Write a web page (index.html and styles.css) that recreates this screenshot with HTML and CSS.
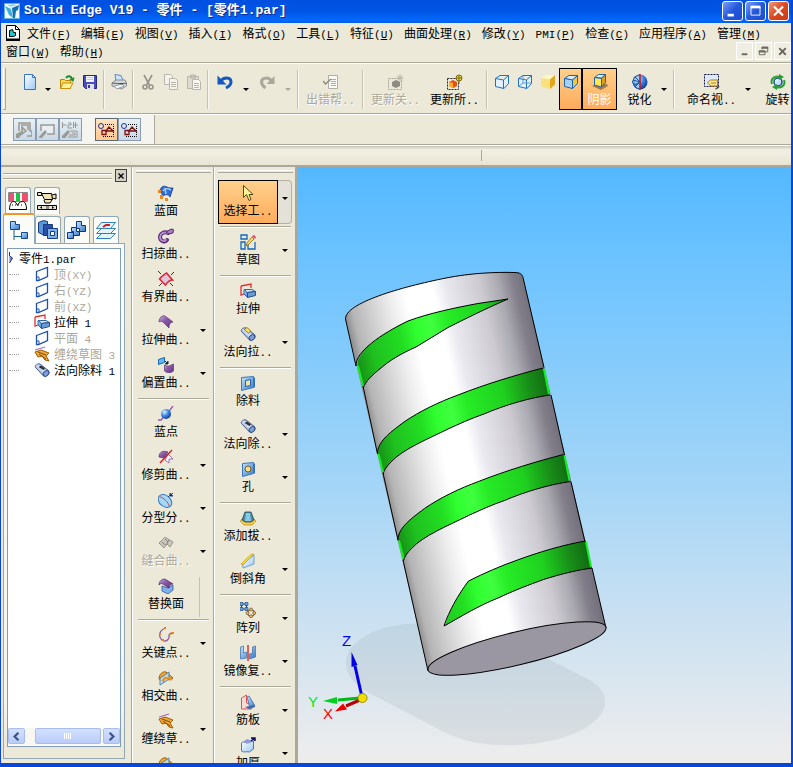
FILE: index.html
```
<!DOCTYPE html>
<html lang="zh">
<head>
    <meta charset="UTF-8">
    <meta name="viewport" content="width=device-width, initial-scale=1.0">
    <title>Solid Edge V19 - 零件 - [零件1.par]</title>
    <link rel="stylesheet" href="styles.css">
</head>
<body>
    <!-- icon sprite -->
    <svg class="sprite" aria-hidden="true">
        <defs>
            <linearGradient id="gBlue" x1="0" y1="0" x2="1" y2="1"><stop offset="0" stop-color="#c4e4ff"/><stop offset="1" stop-color="#3a78c8"/></linearGradient>
            <linearGradient id="gSteel" x1="0" y1="1" x2="1" y2="0"><stop offset="0" stop-color="#3c5c9c"/><stop offset=".5" stop-color="#d4e4f8"/><stop offset="1" stop-color="#5478b4"/></linearGradient>
            <linearGradient id="gPurple" x1="0" y1="0" x2="1" y2="1"><stop offset="0" stop-color="#d0b0e0"/><stop offset=".4" stop-color="#8c5ca8"/><stop offset="1" stop-color="#5c3480"/></linearGradient>
            <linearGradient id="gPaper" x1="0" y1="0" x2="1" y2="1"><stop offset="0" stop-color="#ffffff"/><stop offset="1" stop-color="#9cc8f8"/></linearGradient>
            <radialGradient id="gBall" cx=".35" cy=".3" r=".8"><stop offset="0" stop-color="#d8f0ff"/><stop offset=".5" stop-color="#3c84e0"/><stop offset="1" stop-color="#0a2c80"/></radialGradient>
        </defs>
        <symbol id="i-app" viewBox="0 0 16 16"><path fill="#f4faff" stroke="#6ab0d8" d="M.5.5h15v15H.5z"/><path fill="#39b0e0" d="M1 3l6 3 2 9-4-3z"/><path fill="#1470b0" d="M8 5l7-3-1 5-2 1-1 7H9z"/><path fill="#90d8f4" d="M3 2l6-1 4 1-6 2z"/></symbol>
        <symbol id="i-doc" viewBox="0 0 16 16"><path fill="#fff" stroke="#000" d="M1.500.5h9l4 4v10h-13z"/><path d="M1 13.500h14V16H1z"/><path d="M10.500.5v4h4" fill="none" stroke="#000"/><path fill="#18c8c8" stroke="#000" d="M4.500 5.500l3-1 1 3h2v3l-2 1h-4z"/></symbol>
        <symbol id="i-new" viewBox="0 0 16 16"><path fill="url(#gPaper)" stroke="#3c74c4" d="M2.500.5h8l3 3v12h-11z"/><path fill="#fff" stroke="#3c74c4" d="M10.500.5v3h3z"/></symbol>
        <symbol id="i-open" viewBox="0 0 16 16"><path fill="#f8d850" stroke="#b8860b" d="M1.500 5.500h4l1 1h5v8h-10z"/><path fill="#fff09a" stroke="#c89010" d="M4 9h10l-3 5.500H1.500z"/><path fill="none" stroke="#18902c" stroke-width="2" d="M7 4c2-3 5-2 6 1"/><path fill="#18902c" d="M15.500 3l-1 5-4-2.500z"/></symbol>
        <symbol id="i-save" viewBox="0 0 16 16"><path fill="#4a4cc0" stroke="#26287c" d="M1.500 1.500h13v13h-11l-2-2z"/><path fill="#f4f6ff" d="M4 2h8v6H4z"/><path fill="#bcc" d="M5 3h6v1H5zm0 2h6v1H5z"/><path fill="#e0e2ea" d="M5 10h7v5H5z"/><path fill="#3838a0" d="M6 11h2v3H6z"/></symbol>
        <symbol id="i-print" viewBox="0 0 16 16"><path fill="#cfe6ff" stroke="#5588c4" d="M4 .5l6 1 2 5-7 1z"/><path fill="#d4d6da" stroke="#888c94" d="M1 9l4-3h9l1.500 3v3l-5 3L1 12z"/><path fill="#f4f4f4" stroke="#9a9ea6" d="M3 12l8-2 2 2-7 3z"/><path stroke="#6a6e76" d="M1 9l10 1 4.500-1"/></symbol>
        <symbol id="i-cut" viewBox="0 0 16 16"><g fill="none" stroke="#96938a" stroke-width="1.600"><path d="M4 1l5.500 10M12 1L6.500 11"/><circle cx="5" cy="13" r="2"/><circle cx="11" cy="13" r="2"/></g></symbol>
        <symbol id="i-copy" viewBox="0 0 16 16"><g fill="#f4f3ee" stroke="#b8b5aa"><path d="M1.500.5h6l2 2v8h-8z"/><path d="M6.500 4.500h6l2 2v9h-8z"/><path d="M8 8.500h5M8 10.500h5M8 12.500h5"/></g></symbol>
        <symbol id="i-paste" viewBox="0 0 16 16"><g fill="#dedbd0" stroke="#b8b5aa"><path d="M1.500 2.500h11v12h-11z"/><path fill="#c4c1b6" d="M4.500 1h5v3h-5z"/><path fill="#f8f7f2" d="M6.500 5.500h6l2 2v8h-8z"/><path d="M8 9.500h5M8 11.500h5M8 13.500h5"/></g></symbol>
        <symbol id="i-undo" viewBox="0 0 16 16"><path fill="none" stroke="#1458c0" stroke-width="3" d="M3.500 7.500c3-5 10.500-4.500 10.500.5 0 3-2 4.500-5 6"/><path fill="#1458c0" d="M.5 1.500v9h9L6 7z"/></symbol>
        <symbol id="i-redo" viewBox="0 0 16 16"><path fill="none" stroke="#aaa79c" stroke-width="3" d="M12.500 7c-2.500-4-10-4-10 1 0 3 2 4.500 4 6"/><path fill="#aaa79c" d="M15.500 2v8h-8z"/></symbol>
        <symbol id="i-error" viewBox="0 0 16 16"><path fill="#fbfaf6" stroke="#b0ada2" d="M5.500 1.500h9v13h-9z"/><path stroke="#b0ada2" d="M8 5.500h5M8 7.500h5M8 9.500h5M8 11.500h5"/><path fill="none" stroke="#8e8b80" stroke-width="1.500" d="M0 7l2.500 3L8 5"/></symbol>
        <symbol id="i-upd-off" viewBox="0 0 16 16"><path fill="none" stroke="#aaa79c" stroke-dasharray="2 1" d="M.5 4.500h13v11H.5z"/><path fill="#8e8b80" d="M4 8l4-2 4 2v4l-4 2-4-2z"/><path stroke="#b8b5aa" d="M12 0v8M8.500 4h7M9.500 1.500l5 5M14.500 1.500l-5 5"/></symbol>
        <symbol id="i-upd" viewBox="0 0 16 16"><path fill="none" stroke="#28283c" stroke-dasharray="2 1" d="M.5 4.500h11v11H.5z"/><path fill="#e85010" d="M2 8l4-2 4 2v4l-4 2-4-2z"/><path fill="#ffb020" d="M2 8l4 1v5l-4-2z"/><circle cx="12" cy="4" r="3" fill="#f0d840" stroke="#7a6a10"/><path stroke="#7a6a10" d="M12 1v9M9 4h6"/></symbol>
        <symbol id="i-wire" viewBox="0 0 16 16"><path fill="#e4f2ff" stroke="#2070c0" d="M1.500 4.500L6 1.500h8.500v8L10 14.500l-8.500-2zM1.500 4.500l8 1.500 5-4.500M9.500 6v8"/></symbol>
        <symbol id="i-wire2" viewBox="0 0 16 16"><path fill="#e4f2ff" stroke="#2070c0" d="M1.500 4.500L6 1.500h8.500v8L10 14.500l-8.500-2zM1.500 4.500l8 1.500 5-4.500M9.500 6v8"/><path fill="none" stroke="#5a98d4" d="M6 2v7l-4.500 3.500M6 9h8"/></symbol>
        <symbol id="i-gold" viewBox="0 0 16 16"><path fill="#fff6c0" d="M1 4l5-3h9l-5 4.500z"/><path fill="#fbe080" d="M1 4l9 1.500V15l-9-2.500z"/><path fill="#e4a820" d="M10 5.500L15 1v9.500L10 15z"/></symbol>
        <symbol id="i-shade" viewBox="0 0 16 16"><path fill="#d8eeff" stroke="#1c64b0" d="M1.500 4.500L6 1.500h8.500L9.500 6z"/><path fill="#a8d0f4" stroke="#1c64b0" d="M1.500 4.500l8 1.500v8.500l-8-2z"/><path fill="#f4c830" stroke="#1c64b0" d="M9.500 6l5-4.500v8l-5 5z"/></symbol>
        <symbol id="i-shadow" viewBox="0 0 16 16"><path fill="#a87a48" d="M0 12l6-3 9 1 1 2-7 4z"/><path fill="#d8eeff" stroke="#1c64b0" d="M2.500 3.500l4-3h7l-4 3.500z"/><path fill="#ffe850" stroke="#1c64b0" d="M2.500 3.500l7 1v8.500l-7-2z"/><path fill="#d8a020" stroke="#1c64b0" d="M9.500 4.500l4-4v8l-4 4.500z"/></symbol>
        <symbol id="i-sharp" viewBox="0 0 16 16"><circle cx="8" cy="8" r="7.500" fill="url(#gBall)"/><path fill="#a8ccf0" stroke="#1c54a0" d="M8 .5L2.500 3 .5 8 3 13l5 2.500zM1 6l7 2-6 3M3 3l5 5-5 5"/><path stroke="#e81010" stroke-width="1.300" d="M8 0v16"/></symbol>
        <symbol id="i-named" viewBox="0 0 16 16"><path fill="#dcebfb" stroke="#181848" stroke-dasharray="2 1" d="M.5.5h14v12H.5z"/><path fill="#ffe890" stroke="#b07810" d="M3.500 8.500l3-2.500h7v6h-7z"/><path fill="none" stroke="#b07810" d="M7 9h5"/><path stroke="#787878" d="M11 15c3 0 4-1 4-3"/></symbol>
        <symbol id="i-rotate" viewBox="0 0 16 16"><circle cx="8" cy="8" r="4" fill="url(#gPaper)" stroke="#1c4c90" stroke-width="1.500"/><path fill="none" stroke="#28a030" stroke-width="2" d="M2 10C0 5 5 1 10 3M14 6c2 5-3 9-8 7"/><path fill="#28a030" d="M9 0l5 3-5 3zM7 10l-5 3 5 3z"/></symbol>
        <symbol id="i-g1" viewBox="0 0 16 16"><g fill="none" stroke="#9a9a90" stroke-width="1.500"><path d="M3 9V1h11v8h2v5h-5M5 3h7v5M1 15l6-7M6 5l4 4-4 3z"/></g><path fill="#9a9a90" d="M0 12l4-2 2 2-3 4H0z"/></symbol>
        <symbol id="i-g2" viewBox="0 0 16 16"><path fill="#e8eef2" stroke="#9a9a90" stroke-width="1.500" d="M2 9V3h13v9H8"/><path fill="#9a9a90" d="M0 15l6-7 2 2-5 6H0z"/></symbol>
        <symbol id="i-g3" viewBox="0 0 16 16"><path fill="none" stroke="#9a9a90" d="M.5 0v6M.5 3h4M6 1h3v2H6v3h4M11.500 0v6M13.500 0v6M11 3h5M8 9h7v6H6M10 11h3v2H7"/><path fill="#9a9a90" d="M0 14l6-6 2 2-5 6H0z"/></symbol>
        <symbol id="i-shapes" viewBox="0 0 16 16"><path fill="none" stroke="#000" stroke-dasharray="1 1" d="M7 2.500h8.500v12H4"/><circle cx="3" cy="4" r="2.500" fill="none" stroke="#2030a0"/><path fill="none" stroke="#7a1010" stroke-width="1.300" d="M4 8.500h4v4H4zM8 9l3-4 4 4z"/></symbol>
        <symbol id="i-lib" viewBox="0 0 20 20"><path fill="#fff" stroke="#888" d="M.5 1.500h19v9H.5z"/><path fill="#f05070" d="M1 2h5v8H1zm13 0h5v8h-5z"/><path fill="#18c840" d="M8 2h4v8H8z"/><path fill="#fff" stroke="#000" d="M1.500 18.500c0-5 2-8 4-8s3 2 4 4c1-2 2-4 5-4s4 4 4 8z"/><path stroke="#000" stroke-dasharray="1 2" d="M4 14h12"/></symbol>
        <symbol id="i-cam" viewBox="0 0 20 20"><path fill="#f0e4b4" stroke="#000" d="M4.500 2.500h10l1 6h-8zM.5 1.500h4v3h-4zM15 4l4-1v5l-4-1M7 9l1 3h5l2-3"/><path fill="#e4e0d0" stroke="#000" d="M.5 14.500h19v4H.5z"/><path d="M5 15v3L3 16.500zM15 15v3l2-1.500z"/><path fill="#888" d="M9 15h3v3H9z"/></symbol>
        <symbol id="i-path" viewBox="0 0 20 20"><path fill="none" stroke="#186098" d="M5 8v12M5 16.500h7"/><path fill="url(#gBlue)" stroke="#104890" d="M1.500 1.500h5v3h4v5h-9z"/><path fill="url(#gBlue)" stroke="#104890" d="M12.500 12.500h6v6h-6z"/></symbol>
        <symbol id="i-fam" viewBox="0 0 20 20"><path fill="#5a98d8" stroke="#183c80" d="M.5 2.500l5-2 4 1v3l-3 2v9l-6-3z"/><path fill="#2c50a8" stroke="#183c80" d="M5.500 4.500h9v11h-9z"/><path fill="#7cb0e8" stroke="#183c80" d="M9.500 8.500h10v10h-10z"/><path fill="#fff" stroke="#183c80" d="M12.500 11.500h4v4h-4z"/></symbol>
        <symbol id="i-parts" viewBox="0 0 20 20"><g fill="url(#gBlue)" stroke="#0c3484"><path d="M9.500 1.500h5v4h4v6h-6v-3h-3z"/><path d="M4.500 7.500h5v4h3v4h-6v-4h-2z"/><path d="M.5 12.500h6v6h-6z"/></g></symbol>
        <symbol id="i-layer" viewBox="0 0 20 20"><g fill="#e4f4ff" stroke="#3080b8"><path d="M.5 18.500l5-5h14l-5 5z"/><path d="M.5 13.500l5-5h14l-5 5z"/><path d="M.5 8.500l5-6h14l-5 6z"/></g><path fill="none" stroke="#e01818" stroke-width="2" d="M7 7l3-2h4"/></symbol>
        <symbol id="i-root" viewBox="0 0 8 16"><path fill="#6888d8" stroke="#203078" d="M1.500 2v4l3 2-3 5"/></symbol>
        <symbol id="i-plane" viewBox="0 0 16 16"><path fill="#fff" stroke="#1c50b0" stroke-width="1.300" d="M2.500 5.500l11-4v9l-9 4h-2z"/><path stroke="#1c50b0" d="M2 11h3v3" fill="none"/></symbol>
        <symbol id="i-extrude" viewBox="0 0 16 16"><path fill="none" stroke="#e03030" stroke-width="1.300" d="M1 3l10-2v4M1 3v9l3-1"/><path fill="#d4e8fa" stroke="#3468a4" d="M4 6.500h8l3.500 2-8 1z"/><path fill="url(#gBlue)" stroke="#3468a4" d="M4 6.500L7.500 9.500v5L4 11z"/><path fill="#6a9cd4" stroke="#28508c" d="M7.500 9.500l8-1v4l-8 2z"/></symbol>
        <symbol id="i-wrap" viewBox="0 0 16 16"><path fill="#f0a830" stroke="#a05c08" d="M1 6l6-2 8 3-3 3 3 5-4-1-3-4-4 1z"/><path fill="none" stroke="#7c4a10" d="M4 6l8 3M5 8l7 5"/><path stroke="#a070c0" stroke-width="1.300" d="M1 4l10-3"/></symbol>
        <symbol id="i-tube" viewBox="0 0 16 16"><path fill="url(#gSteel)" stroke="#2c4478" stroke-width=".8" d="M1.500 5.500c-1-2 2-4.500 4.500-3.500l8.500 6.500c2 3-2 6.500-5 5.500z"/><path fill="#302c30" d="M4.500 5l2.500-1.500 4 3L9.500 8z"/><ellipse cx="12" cy="11.500" rx="3.300" ry="2.500" transform="rotate(-45 12 11.500)" fill="#7ca0dc" stroke="#1c3060" stroke-width=".8"/></symbol>
        <symbol id="i-tubeadd" viewBox="0 0 16 16"><path fill="url(#gSteel)" stroke="#2c4478" stroke-width=".8" d="M1.500 5.500c-1-2 2-4.500 4.500-3.500l8.500 6.500c2 3-2 6.500-5 5.500z"/><path fill="#f8e060" stroke="#806818" stroke-width=".8" d="M4 3.500L7 1.500l4 3.500-2.500 2z"/><ellipse cx="12" cy="11.500" rx="3.300" ry="2.500" transform="rotate(-45 12 11.500)" fill="#7ca0dc" stroke="#1c3060" stroke-width=".8"/></symbol>
        <symbol id="i-bluesurf" viewBox="0 0 16 16"><path fill="#2c6cdc" stroke="#0c3494" stroke-width=".8" d="M2 5c2-5 5-4 7-3s3 1 6 1l-3 9c-2-3-4-3-7-1z"/><path fill="none" stroke="#a4d0ff" stroke-width="1.500" d="M5 6c2-3 4-3 8-1M7 3l1 6"/><path fill="#e88820" d="M0 5h3v3H0zm2 5h3v4H2zm5 3h3v3H7z"/></symbol>
        <symbol id="i-sweep" viewBox="0 0 16 16"><path fill="none" stroke="#5c3078" stroke-width="4" stroke-linecap="round" d="M10 5C6 3 2 6 2 9c0 4 5 6 7 3"/><path fill="none" stroke="#b890cc" stroke-width="1.800" stroke-linecap="round" d="M10 5C6 3 2 6 2 9c0 4 4 5 6 3"/><path fill="#a880c0" stroke="#5c3078" d="M8 4l5-3 2.500.5L15 5l-4 1z"/></symbol>
        <symbol id="i-bound" viewBox="0 0 16 16"><path fill="#e0c4dc" stroke="#e02030" stroke-width="1.500" d="M1.500 8c2-3 4-4 7-6l6 7c-3 0-5 2-7 5z"/><path stroke="#303030" d="M0 0l3 3M16 1l-3 3M1 15l3-3M15 15l-3-3"/></symbol>
        <symbol id="i-exsurf" viewBox="0 0 16 16"><path fill="url(#gPurple)" stroke="#5c3078" stroke-width=".7" d="M1 8c0-4 3-7 6-6l8 6c-3 0-4 3-4 6L6 9C4 7 2 7 1 8z"/></symbol>
        <symbol id="i-offset" viewBox="0 0 16 16"><path fill="#60b8f0" stroke="#1868b0" d="M.5 2.500l6-2v5l-6 2z"/><path stroke="#303030" d="M7 4l3 3M10 4v3H7"/><path fill="url(#gPurple)" stroke="#5c3078" stroke-width=".7" d="M6.500 8c3 2 5 1 9-1v7c-4 3-6 2-9 0z"/></symbol>
        <symbol id="i-bluedot" viewBox="0 0 16 16"><path fill="none" stroke="#9058a8" stroke-width="1.300" d="M0 14h3l9-10 3-4"/><circle cx="8" cy="8" r="5" fill="url(#gBall)"/></symbol>
        <symbol id="i-trim" viewBox="0 0 16 16"><path fill="url(#gPurple)" stroke="#5c3078" stroke-width=".7" d="M1 8c0-5 4-7 9-5L6 9z"/><path fill="#fff" stroke="#9070a8" d="M10 5l5 5-4 0 0 4-4-3z"/><path stroke="#e01818" stroke-width="1.300" d="M2 14L14 1"/></symbol>
        <symbol id="i-parting" viewBox="0 0 16 16"><ellipse cx="7" cy="9" rx="7.500" ry="5.500" transform="rotate(40 7 9)" fill="#a4d8f8" stroke="#3878b8"/><path fill="none" stroke="#d84040" d="M2 5c3 0 9 6 9 9"/><path stroke="#1c3c80" d="M10 5l5-4M12 1v3h3"/></symbol>
        <symbol id="i-stitch" viewBox="0 0 16 16"><path fill="#c8c5ba" stroke="#9a978c" d="M1 8l6-6 8 5-3 5-3-3-3 4z"/><path stroke="#84817a" d="M4 7l3 3M7 4l3 3M11 5l-3 5"/></symbol>
        <symbol id="i-replace" viewBox="0 0 16 16"><path fill="#80b0ec" stroke="#305898" stroke-width=".8" d="M4 8l6 2 5-3v5l-5 4-6-3z"/><path fill="url(#gPurple)" stroke="#4c2068" stroke-width=".7" d="M1 7c0-4 3-6 6-6l8 5c-3 0-4 2-4 4L5 6C3 5 2 6 1 7z"/></symbol>
        <symbol id="i-keypt" viewBox="0 0 16 16"><path fill="none" stroke="#9058a8" stroke-width="1.300" d="M8 1C1 3 0 9 4 13c4 3 8-1 7-5 1-2 3-2 4-2"/><path fill="#e88020" d="M6 0h2v2H6zM1 6h2v2H1zm3 6h2v2H4zm7-6h2v2h-2zm3-1h2v2h-2z"/></symbol>
        <symbol id="i-inter" viewBox="0 0 16 16"><path fill="#f4a828" stroke="#a05c08" d="M1 9C1 4 5 1 8 2l7 6-4 2-5-3-2 4z"/><path fill="#c4e4fa" fill-opacity=".7" stroke="#4884b8" d="M2 8l9-6v7l-9 6z"/><path fill="none" stroke="#e89020" stroke-width="2" d="M5 12c1-5 4-5 9-2"/></symbol>
        <symbol id="i-arrow" viewBox="0 0 16 16"><path fill="#fff890" stroke="#504818" d="M3.500.5v12l3-3 2.500 6 2-1-2-5h4z"/></symbol>
        <symbol id="i-sketch" viewBox="0 0 16 16"><path fill="none" stroke="#1468b8" stroke-width="1.300" d="M1 1h6v4H1zM1 8h4v7H1zM8 10v5h7V8"/><path fill="#f8e070" stroke="#806818" stroke-width=".8" d="M7 9l5-6 2 2-6 6-2 .5z"/><path fill="#e04868" d="M12 2l2-1 2 2-1 2z"/></symbol>
        <symbol id="i-cutout" viewBox="0 0 16 16"><path fill="url(#gBlue)" stroke="#3c78bc" d="M1.500 2.500l12-1v11l-12 3z"/><path fill="#f0e4a0" stroke="#2460a8" d="M5.500 5.500l5-1v6l-5 1z"/><path fill="#3470b8" d="M14 2l1 1v9l-1 1z"/></symbol>
        <symbol id="i-hole" viewBox="0 0 16 16"><path fill="url(#gBlue)" stroke="#3c78bc" d="M2.500 2.500l11-1v11l-11 3z"/><circle cx="8" cy="8" r="3" fill="#f8e08c" stroke="#705818"/><path fill="#3470b8" d="M14 2l1 1v9l-1 1z"/></symbol>
        <symbol id="i-draft" viewBox="0 0 16 16"><path fill="#f8cc48" stroke="#c89018" stroke-width=".8" d="M0 11l3-3h10l3 3-4 4H4z"/><path fill="#508c9c" stroke="#1c4858" stroke-width=".8" d="M2 10l3-8h6l3 8-3 2H5z"/><path fill="#88c8e8" d="M6 3h4l1 8H5z"/></symbol>
        <symbol id="i-chamfer" viewBox="0 0 16 16"><path fill="url(#gPaper)" stroke="#5c94cc" stroke-width=".8" d="M2.500 11L14 2v9L3 15z"/><path fill="#f8dc38" stroke="#c8a010" stroke-width=".8" d="M1 11L11 1.500 14 1 3 12z"/></symbol>
        <symbol id="i-pattern" viewBox="0 0 16 16"><path fill="none" stroke="#183c80" d="M1.500 2h5v5h-5z"/><path fill="#68a8e0" stroke="#183c80" stroke-width=".6" d="M0 .5h3v3H0zm5 0h3v3H5zm-5 5h3v3H0zm5 0h3v3H5z"/><circle cx="11" cy="11" r="3.500" fill="none" stroke="#604010"/><g fill="#e8b878" stroke="#604010" stroke-width=".6"><circle cx="11" cy="7.500" r="1.500"/><circle cx="14.200" cy="11" r="1.500"/><circle cx="11" cy="14.300" r="1.500"/><circle cx="7.500" cy="11" r="1.500"/></g></symbol>
        <symbol id="i-mirror" viewBox="0 0 16 16"><path fill="url(#gBlue)" stroke="#4878b0" stroke-width=".8" d="M.5 2l3-1v7l3-1v6l-6 1zM15.500 1l-3 1v6l-3 1v5l6-2z"/><path stroke="#e01818" stroke-width="1.300" d="M8 0v16"/></symbol>
        <symbol id="i-rib" viewBox="0 0 16 16"><path fill="#fbdcd4" stroke="#e05050" d="M1.500 4l5-3v8l5 2v4h-10z"/><path fill="url(#gBlue)" stroke="#386cac" stroke-width=".8" d="M7 3l2-1 6 10-5 2z"/><path fill="#386cac" d="M5 13l9-2 1 2-6 2z"/></symbol>
        <symbol id="i-thick" viewBox="0 0 16 16"><path fill="url(#gPaper)" stroke="#2c5ca8" stroke-width=".8" d="M1.500 6c3-3 5 2 8-1l4-1v8l-4 3c-3-1-5 1-8-1z"/><path fill="#8c98e0" d="M3 5l4-3 6 2-3 2z"/><path stroke="#101060" stroke-width="1.500" d="M11 4l4-3M11 1h4v3"/></symbol>
    </svg>

    <div class="window">
        <header class="title-bar">
            <svg class="icon"><use href="#i-app"/></svg>
            <h1>Solid Edge V19 - 零件 - [零件1.par]</h1>
            <div class="win-buttons">
                <button class="win-btn" aria-label="最小化"><svg viewBox="0 0 21 20"><path fill="#fff" d="M5 13h7v3H5z"/></svg></button>
                <button class="win-btn" aria-label="最大化"><svg viewBox="0 0 21 20"><path fill="none" stroke="#fff" d="M5.500 5.500h10v9h-10z"/><path fill="#fff" d="M5 4h11v3H5z"/></svg></button>
                <button class="win-btn close" aria-label="关闭"><svg viewBox="0 0 21 20"><path stroke="#fff" stroke-width="2.400" d="M5.500 5l10 10M15.500 5l-10 10"/></svg></button>
            </div>
        </header>

        <nav class="menu-bar">
            <button class="menu-doc" aria-label="文档"><svg class="icon"><use href="#i-doc"/></svg></button>
            <button class="menu-item">文件<span class="en">(<u>F</u>)</span></button>
            <button class="menu-item">编辑<span class="en">(<u>E</u>)</span></button>
            <button class="menu-item">视图<span class="en">(<u>V</u>)</span></button>
            <button class="menu-item">插入<span class="en">(<u>I</u>)</span></button>
            <button class="menu-item">格式<span class="en">(<u>O</u>)</span></button>
            <button class="menu-item">工具<span class="en">(<u>L</u>)</span></button>
            <button class="menu-item">特征<span class="en">(<u>U</u>)</span></button>
            <button class="menu-item">曲面处理<span class="en">(<u>R</u>)</span></button>
            <button class="menu-item">修改<span class="en">(<u>Y</u>)</span></button>
            <button class="menu-item"><span class="en">PMI(<u>P</u>)</span></button>
            <button class="menu-item">检查<span class="en">(<u>C</u>)</span></button>
            <button class="menu-item">应用程序<span class="en">(<u>A</u>)</span></button>
            <button class="menu-item">管理<span class="en">(<u>M</u>)</span></button>
            <button class="menu-item">窗口<span class="en">(<u>W</u>)</span></button>
            <button class="menu-item">帮助<span class="en">(<u>H</u>)</span></button>
            <div class="mdi-buttons">
                <button class="mdi-btn" aria-label="最小化文档"><svg viewBox="0 0 16 18"><path fill="#6a675c" d="M5 11h6v2H5z"/></svg></button>
                <button class="mdi-btn" aria-label="还原文档"><svg viewBox="0 0 16 18"><path fill="none" stroke="#6a675c" d="M6.500 7V4.500h6v5H10M3.500 8.500h6v4h-6z"/><path fill="#6a675c" d="M6 4h7v2H6zM3 8h7v2H3z"/></svg></button>
                <button class="mdi-btn" aria-label="关闭文档"><svg viewBox="0 0 16 18"><path stroke="#6a675c" stroke-width="2" d="M4.500 5.500l7 7M11.500 5.500l-7 7"/></svg></button>
            </div>
        </nav>

        <div class="toolbar">
            <span class="grip"></span>
            <button class="tool" aria-label="新建"><svg class="icon"><use href="#i-new"/></svg></button>
            <button class="drop" aria-label="新建选项"></button>
            <button class="tool" aria-label="打开"><svg class="icon"><use href="#i-open"/></svg></button>
            <button class="tool" aria-label="保存"><svg class="icon"><use href="#i-save"/></svg></button>
            <span class="sep"></span>
            <button class="tool" aria-label="打印"><svg class="icon"><use href="#i-print"/></svg></button>
            <span class="sep"></span>
            <button class="tool" aria-label="剪切" disabled><svg class="icon"><use href="#i-cut"/></svg></button>
            <button class="tool" aria-label="复制" disabled><svg class="icon"><use href="#i-copy"/></svg></button>
            <button class="tool" aria-label="粘贴" disabled><svg class="icon"><use href="#i-paste"/></svg></button>
            <span class="sep"></span>
            <button class="tool history" aria-label="撤消"><svg class="icon"><use href="#i-undo"/></svg></button>
            <button class="drop" aria-label="撤消列表"></button>
            <button class="tool history" aria-label="重复" disabled><svg class="icon"><use href="#i-redo"/></svg></button>
            <button class="drop" aria-label="重复列表" disabled></button>
            <span class="sep"></span>
            <button class="tool text" disabled><svg class="icon"><use href="#i-error"/></svg><span>出错帮<i class="en">..</i></span></button>
            <span class="sep"></span>
            <button class="tool text" disabled><svg class="icon"><use href="#i-upd-off"/></svg><span>更新关<i class="en">..</i></span></button>
            <button class="tool text"><svg class="icon"><use href="#i-upd"/></svg><span>更新所<i class="en">..</i></span></button>
            <span class="sep"></span>
            <button class="tool" aria-label="线框"><svg class="icon"><use href="#i-wire"/></svg></button>
            <button class="tool" aria-label="隐藏边"><svg class="icon"><use href="#i-wire2"/></svg></button>
            <button class="tool" aria-label="着色"><svg class="icon"><use href="#i-gold"/></svg></button>
            <button class="tool on" aria-label="着色带边"><svg class="icon"><use href="#i-shade"/></svg></button>
            <button class="tool short on"><svg class="icon"><use href="#i-shadow"/></svg><span>阴影</span></button>
            <button class="tool short spaced"><svg class="icon"><use href="#i-sharp"/></svg><span>锐化</span></button>
            <button class="drop" aria-label="锐化选项"></button>
            <span class="sep"></span>
            <button class="tool text spaced"><svg class="icon"><use href="#i-named"/></svg><span>命名视<i class="en">..</i></span></button>
            <button class="drop" aria-label="命名视图选项"></button>
            <button class="tool short spaced"><svg class="icon"><use href="#i-rotate"/></svg><span>旋转</span></button>
        </div>

        <div class="sub-toolbar">
            <div class="sub-group">
                <button class="mini" aria-label="选择" disabled><svg class="icon"><use href="#i-g1"/></svg></button>
                <button class="mini" aria-label="区域" disabled><svg class="icon"><use href="#i-g2"/></svg></button>
                <button class="mini" aria-label="尺寸" disabled><svg class="icon"><use href="#i-g3"/></svg></button>
                <button class="mini on first" aria-label="内部"><svg class="icon"><use href="#i-shapes"/></svg></button>
                <button class="mini" aria-label="重叠"><svg class="icon"><use href="#i-shapes"/></svg></button>
            </div>
        </div>

        <div class="prompt-bar"><span></span><span></span></div>

        <main class="workspace">
            <aside class="edge-bar">
                <div class="edge-head">
                    <span class="edge-grip"></span>
                    <button class="edge-close" aria-label="关闭面板"><svg viewBox="0 0 12 12"><path stroke="#000" stroke-width="1.600" d="M3 3l6 6M9 3l-6 6"/></svg></button>
                </div>
                <div class="tabs upper">
                    <button class="tab" aria-label="特征库"><svg><use href="#i-lib"/></svg></button>
                    <button class="tab" aria-label="回放"><svg><use href="#i-cam"/></svg></button>
                </div>
                <div class="tabs">
                    <button class="tab active" aria-label="路径查找器"><svg><use href="#i-path"/></svg></button>
                    <button class="tab" aria-label="零件族"><svg><use href="#i-fam"/></svg></button>
                    <button class="tab" aria-label="零件库"><svg><use href="#i-parts"/></svg></button>
                    <button class="tab" aria-label="图层"><svg><use href="#i-layer"/></svg></button>
                </div>
                <div class="tab-body">
                    <div class="tree-box">
                        <div class="tree-root"><svg><use href="#i-root"/></svg><span>零件<i class="en">1.par</i></span></div>
                        <ul class="tree">
                            <li class="dim"><svg class="icon"><use href="#i-plane"/></svg><span>顶<i class="en">(XY)</i></span></li>
                            <li class="dim"><svg class="icon"><use href="#i-plane"/></svg><span>右<i class="en">(YZ)</i></span></li>
                            <li class="dim"><svg class="icon"><use href="#i-plane"/></svg><span>前<i class="en">(XZ)</i></span></li>
                            <li><svg class="icon"><use href="#i-extrude"/></svg><span>拉伸<i class="en"> 1</i></span></li>
                            <li class="dim"><svg class="icon"><use href="#i-plane"/></svg><span>平面<i class="en"> 4</i></span></li>
                            <li class="dim"><svg class="icon"><use href="#i-wrap"/></svg><span>缠绕草图<i class="en"> 3</i></span></li>
                            <li><svg class="icon"><use href="#i-tube"/></svg><span>法向除料<i class="en"> 1</i></span></li>
                        </ul>
                        <div class="scrollbar">
                            <button class="scroll-btn" aria-label="向左滚动"><svg viewBox="0 0 16 16"><path fill="none" stroke="#3c5488" stroke-width="2.400" d="M10 4L6 8l4 4"/></svg></button>
                            <div class="scroll-track"><div class="scroll-thumb"><svg viewBox="0 0 8 8"><path stroke="#fff" d="M.5 1v6M2.500 1v6M4.500 1v6M6.500 1v6"/></svg></div></div>
                            <button class="scroll-btn" aria-label="向右滚动"><svg viewBox="0 0 16 16"><path fill="none" stroke="#3c5488" stroke-width="2.400" d="M6 4l4 4-4 4"/></svg></button>
                        </div>
                    </div>
                </div>
            </aside>

            <div class="palette">
                <span class="palette-grip"></span>
                <div class="row"><button class="feature"><svg class="icon"><use href="#i-bluesurf"/></svg><span>蓝面</span></button></div>
                <div class="row"><button class="feature"><svg class="icon"><use href="#i-sweep"/></svg><span>扫掠曲<i class="en">..</i></span></button></div>
                <div class="row"><button class="feature"><svg class="icon"><use href="#i-bound"/></svg><span>有界曲<i class="en">..</i></span></button></div>
                <div class="row"><button class="feature"><svg class="icon"><use href="#i-exsurf"/></svg><span>拉伸曲<i class="en">..</i></span></button><button class="drop" aria-label="拉伸曲面选项"></button></div>
                <div class="row"><button class="feature"><svg class="icon"><use href="#i-offset"/></svg><span>偏置曲<i class="en">..</i></span></button><button class="drop" aria-label="偏置曲面选项"></button></div>
                <hr>
                <div class="row"><button class="feature"><svg class="icon"><use href="#i-bluedot"/></svg><span>蓝点</span></button></div>
                <div class="row"><button class="feature"><svg class="icon"><use href="#i-trim"/></svg><span>修剪曲<i class="en">..</i></span></button><button class="drop" aria-label="修剪曲面选项"></button></div>
                <div class="row"><button class="feature"><svg class="icon"><use href="#i-parting"/></svg><span>分型分<i class="en">..</i></span></button><button class="drop" aria-label="分型选项"></button></div>
                <div class="row"><button class="feature" disabled><svg class="icon"><use href="#i-stitch"/></svg><span>缝合曲<i class="en">..</i></span></button><button class="drop" aria-label="缝合曲面选项"></button></div>
                <div class="row"><button class="feature"><svg class="icon"><use href="#i-replace"/></svg><span>替换面</span></button><span class="row-line"></span></div>
                <hr>
                <div class="row"><button class="feature"><svg class="icon"><use href="#i-keypt"/></svg><span>关键点<i class="en">..</i></span></button><button class="drop" aria-label="关键点选项"></button></div>
                <div class="row"><button class="feature"><svg class="icon"><use href="#i-inter"/></svg><span>相交曲<i class="en">..</i></span></button></div>
                <div class="row"><button class="feature"><svg class="icon"><use href="#i-wrap"/></svg><span>缠绕草<i class="en">..</i></span></button><button class="drop" aria-label="缠绕草图选项"></button></div>
                <div class="row"><button class="feature" aria-label="投影曲线"><svg class="icon"><use href="#i-inter"/></svg></button></div>
            </div>

            <div class="palette">
                <span class="palette-grip"></span>
                <div class="row selected"><button class="feature"><svg class="icon"><use href="#i-arrow"/></svg><span>选择工<i class="en">..</i></span></button><button class="drop" aria-label="选择选项"></button></div>
                <hr>
                <div class="row"><button class="feature"><svg class="icon"><use href="#i-sketch"/></svg><span>草图</span></button><button class="drop" aria-label="草图选项"></button></div>
                <hr>
                <div class="row"><button class="feature"><svg class="icon"><use href="#i-extrude"/></svg><span>拉伸</span></button></div>
                <div class="row"><button class="feature"><svg class="icon"><use href="#i-tubeadd"/></svg><span>法向拉<i class="en">..</i></span></button><button class="drop" aria-label="法向拉伸选项"></button></div>
                <hr>
                <div class="row"><button class="feature"><svg class="icon"><use href="#i-cutout"/></svg><span>除料</span></button></div>
                <div class="row"><button class="feature"><svg class="icon"><use href="#i-tube"/></svg><span>法向除<i class="en">..</i></span></button><button class="drop" aria-label="法向除料选项"></button></div>
                <div class="row"><button class="feature"><svg class="icon"><use href="#i-hole"/></svg><span>孔</span></button><button class="drop" aria-label="孔选项"></button></div>
                <hr>
                <div class="row"><button class="feature"><svg class="icon"><use href="#i-draft"/></svg><span>添加拔<i class="en">..</i></span></button></div>
                <div class="row"><button class="feature"><svg class="icon"><use href="#i-chamfer"/></svg><span>倒斜角</span></button><button class="drop" aria-label="倒斜角选项"></button></div>
                <hr>
                <div class="row"><button class="feature"><svg class="icon"><use href="#i-pattern"/></svg><span>阵列</span></button><button class="drop" aria-label="阵列选项"></button></div>
                <div class="row"><button class="feature"><svg class="icon"><use href="#i-mirror"/></svg><span>镜像复<i class="en">..</i></span></button><button class="drop" aria-label="镜像选项"></button></div>
                <hr>
                <div class="row"><button class="feature"><svg class="icon"><use href="#i-rib"/></svg><span>筋板</span></button><button class="drop" aria-label="筋板选项"></button></div>
                <div class="row"><button class="feature"><svg class="icon"><use href="#i-thick"/></svg><span>加厚</span></button><button class="drop" aria-label="加厚选项"></button></div>
            </div>

            <section class="viewport">
                <svg viewBox="297 167 493 596">
                    <defs>
                        <linearGradient id="body" gradientUnits="userSpaceOnUse" x1="345" y1="317" x2="522" y2="276">
                            <stop offset="0" stop-color="#909090"/><stop offset=".04" stop-color="#b4b4b4"/><stop offset=".15" stop-color="#d2d2d2"/><stop offset=".26" stop-color="#eee"/><stop offset=".35" stop-color="#fff"/><stop offset=".5" stop-color="#fff"/><stop offset=".57" stop-color="#eae9f0"/><stop offset=".76" stop-color="#cccad0"/><stop offset=".86" stop-color="#aaa8b0"/><stop offset=".94" stop-color="#827f8a"/><stop offset="1" stop-color="#74717c"/>
                        </linearGradient>
                        <linearGradient id="groove" gradientUnits="userSpaceOnUse" x1="345" y1="317" x2="522" y2="276">
                            <stop offset="0" stop-color="#159015"/><stop offset=".1" stop-color="#1fc01f"/><stop offset=".27" stop-color="#22de22"/><stop offset=".36" stop-color="#30ff30"/><stop offset=".45" stop-color="#40ff40"/><stop offset=".54" stop-color="#26ec26"/><stop offset=".75" stop-color="#1fd01f"/><stop offset=".9" stop-color="#188c18"/><stop offset="1" stop-color="#126c12"/>
                        </linearGradient>
                    </defs>
                    <!-- ground shadow -->
                    <path class="ground" d="M430 624C385 620 345 638 345 663c0 12 8 21 23 30l77 40c24 11 48 13 70 12 55-2 89-23 89-43 0-12-9-19-19-24l-60-30z"/>
                    <!-- cylinder -->
                    <path fill="url(#body)" d="M344.500 319C344 303 400 287 445 278c25-5 50-6 68-5.500 7 0 8 2 9 5l83 350-178 42z"/>
                    <path class="edge" d="M355 366L344.500 319C344 303 400 287 445 278c25-5 50-6 68-5.500 7 0 8 2 9 5l21 90M362 386l14.500 68M382 473l15 67M402 560l25 111M550 395l13.500 60M570 482l14 60M591 568l14 60"/>
                    <ellipse class="edge cap" cx="516" cy="648.500" rx="91.500" ry="16.500" transform="rotate(-13.500 516 648.500)"/>
                    <!-- helical groove -->
                    <path fill="url(#groove)" d="M357 366C354 352 380 334 407 321c22-8 46-13 70-17.500L507 299c-21 9-45 21-60 28.500L415 347c-16 7-27 14-35 21-10 8-15 13-18 18.500z"/>
                    <path class="edge" d="M355 366C354 352 380 334 407 321c22-8 46-13 70-17.500L507 299c-21 9-45 21-60 28.500L415 347c-16 7-27 14-35 21-10 8-15 13-18 20"/>
                    <path class="rim" d="M357 366l5 20"/>
                    <g id="band">
                        <path fill="url(#groove)" d="M377 452c0-10 10-18 26-30 16-11 35-20 54-27 28-11 58-20 85-27l6 27c-20 3-44 10-65 19-12 4-25 10-36 15-20 10-45 20-57 33-4 4-7 8-8 11z"/>
                        <path class="edge" d="M376.500 454c0-12 10.500-20 26.500-32 16-11 35-20 54-27 28-11 58-20 85-27M549 395c-21 3-45 10-66 19-12 4-25 10-36 15-20 10-45 20-57 33-4 4-7 8-8 12"/>
                        <path class="rim" d="M377.500 454l4.500 18M543 369l5 25"/>
                    </g>
                    <use href="#band" x="20.500" y="86.500"/>
                    <path fill="url(#groove)" d="M467.500 581c16-8 32-15 49-21 22-8 45-15 68-19l6 27c-14 2-30 6-46 11-17 6-32 12-47 19-20 8-36 18-53.500 28 4-15 13-31 23.500-45z"/>
                    <path class="edge" d="M584.500 541c-23 4-46 11-68 19-17 6-33 13-49 21C457 595 448 611 443 626c18-10 34-20 54-28 15-7 30-13 47-19 16-5 32-9 47-11"/>
                    <path class="rim" d="M585 542l5 25"/>
                    <!-- axis triad -->
                    <g stroke-width="3"><path stroke="#0000e8" d="M361 697l-7-31"/><path stroke="#00b818" d="M359 698l-22 2"/><path stroke="#b80000" d="M359 700l-14 6"/></g>
                    <path fill="#0000e8" d="M350.500 652l6 13-6 2z"/>
                    <path fill="#00d020" d="M322 701l14-4v7z"/>
                    <path fill="#e80000" d="M334 711.500l8-8 4 6z"/>
                    <circle cx="361.500" cy="698" r="4.500" fill="#f0e000" stroke="#a09000"/>
                    <g class="axis"><text x="341" y="646" fill="#0000ff">Z</text><text x="307" y="707" fill="#00e818">Y</text><text x="322" y="719" fill="#ff0000">X</text></g>
                </svg>
            </section>
        </main>
    </div>
</body>
</html>
```
FILE: styles.css
```
* {
    box-sizing: border-box;
}
body {
    margin: 0;
    font-family: "Noto Sans CJK SC", sans-serif;
    font-size: 12px;
    line-height: 16px;
    color: #000;
}
button {
    margin: 0;
    padding: 0;
    border: none;
    background: none;
    font: inherit;
    color: inherit;
    flex: none;
}
svg {
    display: block;
    flex: none;
}
.sprite {
    position: absolute;
    width: 0;
    height: 0;
}
.icon {
    width: 16px;
    height: 16px;
}
.en {
    font-family: "Liberation Mono", monospace;
    font-size: 11px;
    font-style: normal;
    line-height: 12px;
    white-space: pre;
}
.window {
    display: flex;
    flex-direction: column;
    height: 100vh;
    overflow: hidden;
    background: #ece9d8;
    border: solid #0846d8;
    border-width: 0 2px 4px 1px;
}

/* title */
.title-bar {
    display: flex;
    align-items: center;
    flex: none;
    height: 23px;
    margin: 0 -2px 0 -1px;
    padding: 0 4px 2px;
    background: linear-gradient(#0050e0, #0054e4 50%, #0468fc 85%, #0060f0);
    color: #fff;
}
.title-bar h1 {
    flex: 1;
    margin: 0 0 0 4px;
    font: bold 13px/18px "Liberation Mono", "Noto Sans CJK SC", monospace;
    text-shadow: 1px 1px #0a2c90;
    white-space: nowrap;
}
.win-buttons {
    display: flex;
    gap: 2px;
}
.win-btn {
    width: 21px;
    height: 20px;
    border: 1px solid #fff;
    border-radius: 3px;
    background: linear-gradient(135deg, #7ca0f4, #2458dc 50%, #1c4cd0);
}
.win-btn.close {
    background: linear-gradient(135deg, #f09878, #dc4820 50%, #c43c14);
}

/* menu */
.menu-bar {
    display: flex;
    flex-wrap: wrap;
    flex: none;
    padding: 1px 0 2px;
    border-bottom: 1px solid #aca899;
}
.menu-item {
    height: 18px;
    padding: 0 5px;
    white-space: nowrap;
}
.menu-doc {
    width: 21px;
    padding-left: 4px;
}
.mdi-buttons {
    display: flex;
    gap: 2px;
    margin-left: auto;
}
.mdi-btn {
    width: 17px;
    height: 18px;
    border: 1px solid #fff;
    background: #f0eee2;
}

/* main toolbar */
.toolbar {
    display: flex;
    flex: none;
    height: 51px;
    padding: 4px 0 3px 2px;
    border-top: 1px solid #fff;
    border-bottom: 1px solid #aca899;
    overflow: hidden;
}
.grip {
    flex: none;
    width: 3px;
    margin-right: 12px;
    border: solid #aca899;
    border-width: 0 1px 1px 0;
    box-shadow: inset 1px 0 #fff;
}
.tool {
    display: flex;
    flex-direction: column;
    align-items: center;
    gap: 1px;
    width: 23px;
    padding-top: 6px;
    white-space: nowrap;
}
.tool.history {
    width: 28px;
}
.tool.text {
    width: 59px;
}
.tool.short {
    width: 35px;
}
.tool.spaced {
    margin-left: 5px;
}
.tool.on {
    padding-top: 5px;
    border: 1px solid #000;
    background: linear-gradient(#ffd08c, #ffac5c);
    color: #fff;
}
.tool:disabled,
.feature:disabled {
    color: #aca899;
    text-shadow: 1px 1px #fff;
}
.drop {
    width: 14px;
}
.drop::before {
    content: "";
    display: block;
    width: 0;
    margin: 0 auto;
    border: solid transparent;
    border-width: 3px 3px 0;
    border-top-color: #000;
}
.drop:disabled::before {
    border-top-color: #aca899;
}
.sep {
    flex: none;
    width: 2px;
    margin: 2px 2px 1px;
    border-left: 1px solid #c5c2b2;
    border-right: 1px solid #f8f7f0;
}

/* second toolbar */
.sub-toolbar {
    flex: none;
    height: 31px;
    border-top: 1px solid #fff;
    border-bottom: 1px solid #aca899;
}
.sub-group {
    display: flex;
    align-items: center;
    width: 154px;
    height: 29px;
    padding-left: 12px;
    border-right: 1px solid #aca899;
    background: #f5f4ee;
}
.mini {
    width: 23px;
    height: 23px;
    padding: 2px;
    border: 1px solid #8a9cae;
    background: linear-gradient(#e8f0f6, #c8d8e6);
}
.mini.on {
    border-color: #5c6874;
    background: linear-gradient(#ffe4c4, #ffc890);
}
.mini.first {
    margin-left: 13px;
}
.prompt-bar {
    display: flex;
    flex: none;
    height: 22px;
    padding: 4px 0;
    border-top: 1px solid #fff;
    border-bottom: 2px solid #aca899;
    background: linear-gradient(#c8c5b4, #f2f0e4 20%, #e8e5d4);
}
.prompt-bar span {
    flex: 9;
}
.prompt-bar span:first-child {
    flex: 14;
    border-right: 1px solid #aca899;
}

/* workspace */
.workspace {
    display: flex;
    flex: 1;
    min-height: 0;
}
.edge-bar {
    display: flex;
    flex-direction: column;
    flex: none;
    width: 131px;
    padding: 2px 6px 4px 2px;
    border-right: 1px solid #aca899;
}
.edge-head {
    display: flex;
    align-items: center;
    gap: 3px;
    margin-right: -2px;
}
.edge-grip {
    flex: 1;
    height: 6px;
    border: solid #aca899;
    border-width: 1px 0;
    box-shadow: inset 0 1px #fff, 0 1px #fff;
}
.edge-close {
    width: 12px;
    height: 13px;
    border: 1px solid #404040;
    background: #d4d0c8;
}
.tabs {
    display: flex;
    align-items: flex-end;
    gap: 3px;
    height: 29px;
}
.tabs.upper {
    height: 32px;
    padding-left: 2px;
}
.tab {
    display: flex;
    align-items: center;
    justify-content: center;
    width: 26px;
    height: 27px;
    border: 1px solid #91a7b4;
    border-bottom: none;
    border-radius: 3px 3px 0 0;
    background: #fbfbf8;
}
.tab svg {
    width: 20px;
    height: 20px;
}
.tab.active {
    width: 32px;
    height: 31px;
    margin: 0 -3px -1px 0;
    border-top: 2px solid #f0962c;
    z-index: 1;
}
.tab-body {
    flex: 1;
    display: flex;
    min-height: 0;
    padding: 4px 3px 11px;
    border: 1px solid #91a7b4;
    background: linear-gradient(#fbfbf8, #f4f3ee 90%, #ece9d8 98%);
}
.tree-box {
    flex: 1;
    display: flex;
    flex-direction: column;
    min-width: 0;
    padding: 1px 0;
    border: 1px solid #7f9db9;
    background: #fff;
}
.tree-root,
.tree li {
    display: flex;
    align-items: center;
    height: 16px;
    white-space: nowrap;
}
.tree-root svg {
    width: 8px;
    height: 16px;
    margin-right: 3px;
}
.tree {
    flex: 1;
    margin: 0;
    padding: 0;
    list-style: none;
}
.tree li::before {
    content: "";
    width: 10px;
    margin: 0 15px 0 1px;
    border-top: 1px dotted #a0a0a0;
}
.tree .icon {
    margin-right: 4px;
}
.tree .dim {
    color: #aca899;
}
.scrollbar {
    display: flex;
    height: 17px;
    background: #f8f7f2;
}
.scroll-btn,
.scroll-thumb {
    display: flex;
    align-items: center;
    justify-content: center;
    height: 16px;
    border: 1px solid #a8bcf0;
    border-radius: 2px;
    background: linear-gradient(#d4e0ff, #b8ccfa);
}
.scroll-btn {
    width: 17px;
}
.scroll-thumb svg {
    width: 8px;
    height: 8px;
}
.scroll-track {
    flex: 1;
    padding: 0 2px 0 10px;
}

/* feature palettes */
.palette {
    flex: none;
    width: 82px;
    padding: 3px 2px 0 3px;
    overflow: hidden;
    border-left: 1px solid #fff;
    border-right: 1px solid #aca899;
}
.palette-grip {
    display: block;
    height: 3px;
    margin: 0 0 10px;
    border-bottom: 1px solid #aca899;
    border-top: 1px solid #fff;
}
.row {
    display: flex;
    height: 43px;
}
.feature {
    display: flex;
    flex-direction: column;
    align-items: center;
    gap: 1px;
    width: 60px;
    padding-top: 2px;
    white-space: nowrap;
}
.row .drop::before {
    margin-top: -5px;
}
.palette hr {
    height: 6px;
    margin: 0 2px;
    border: none;
    border-top: 1px solid #aca899;
    box-shadow: inset 0 1px #fff;
}
.row-line {
    margin: 1px 3px 2px;
    border-left: 1px solid #c5c2b2;
}
.row.selected {
    height: 44px;
    margin: -3px 0 2px;
}
.row.selected .feature {
    padding-top: 4px;
    border: 1px solid #000;
    background: linear-gradient(#ffd08c, #ffac5c);
}
.row.selected .drop {
    border: 1px solid #b4b1a2;
    border-left: none;
    border-radius: 0 4px 4px 0;
    background: #e4e2d8;
}

/* model view */
.viewport {
    flex: 1;
    min-width: 0;
    border-left: 2px solid #aca899;
    background: linear-gradient(#54b8ff, #6dc3ff 16%, #a0d4f7 51%, #c6dff2 73%, #ececec 98%);
}
.viewport svg {
    width: 100%;
    height: 100%;
}
.ground {
    fill: #5a6c74;
    fill-opacity: .1;
}
.edge {
    fill: none;
    stroke: #000;
}
.cap {
    fill: #9a97a3;
}
.rim {
    fill: none;
    stroke: #10f020;
    stroke-width: 2;
}
.axis {
    font-family: "Liberation Sans", sans-serif;
    font-size: 15px;
}
```
